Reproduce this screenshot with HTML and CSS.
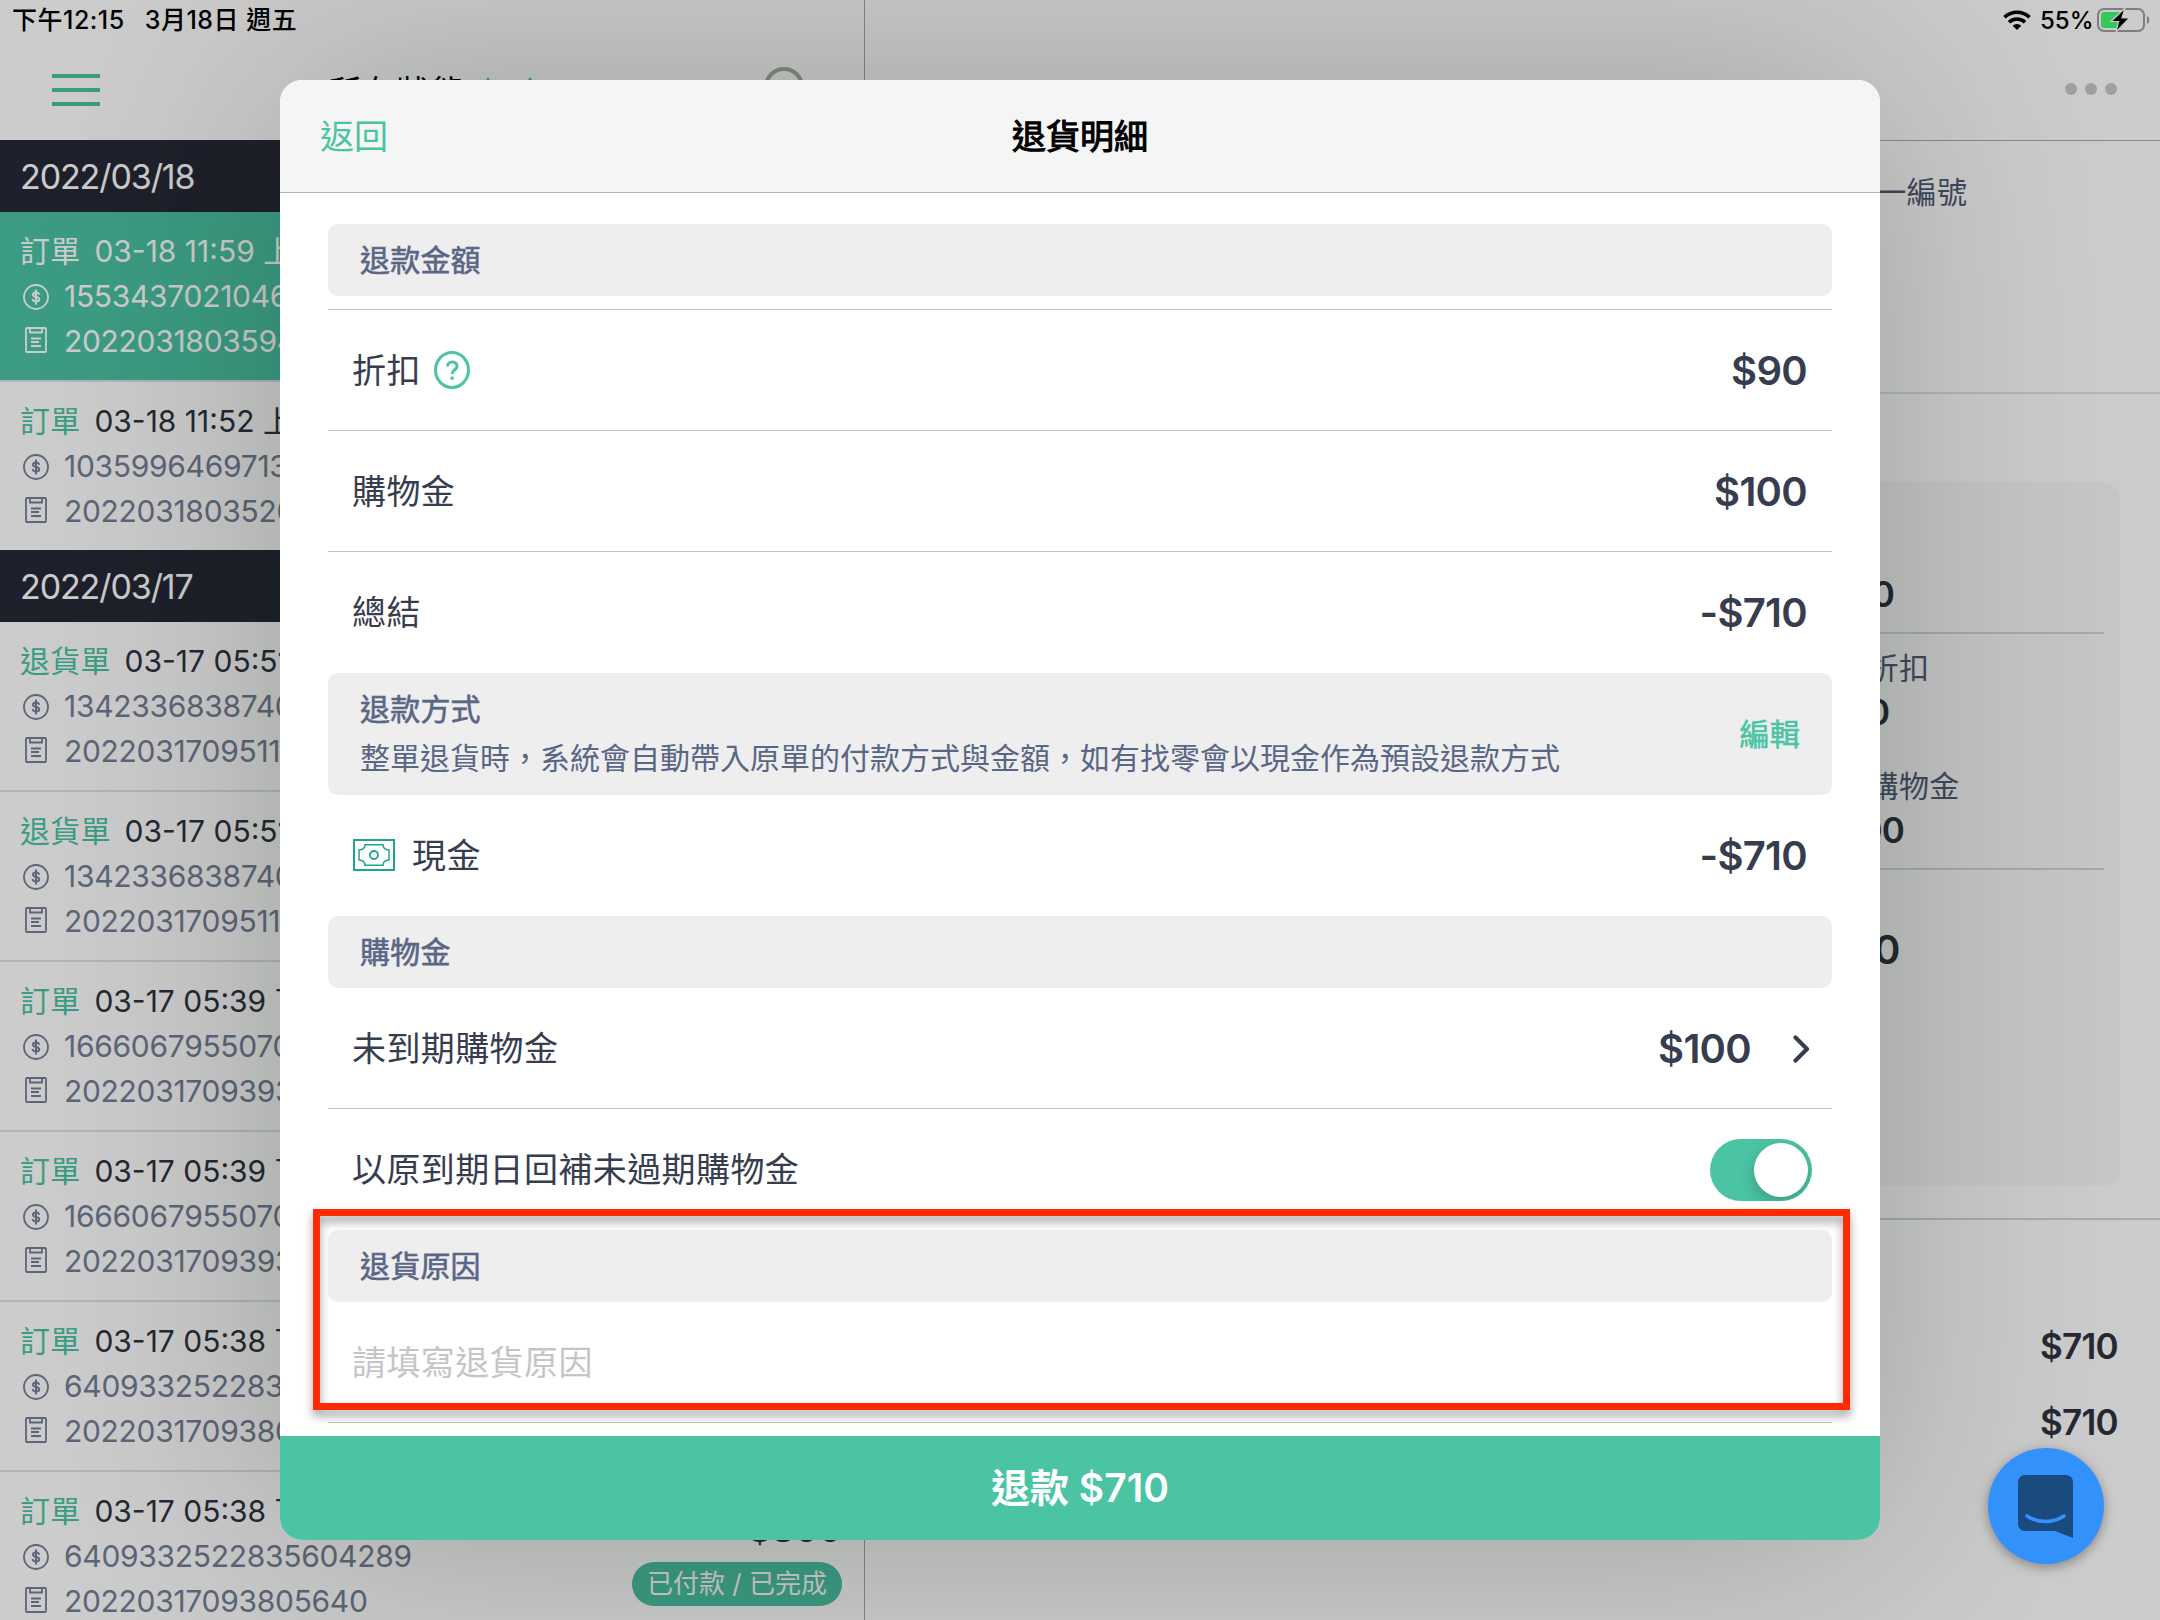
FILE: index.html
```
<!DOCTYPE html>
<html lang="zh-Hant">
<head>
    <title>退貨明細</title>
    <meta charset="utf-8">
    <meta name="viewport" content="width=device-width, initial-scale=1.0">
    <link rel="stylesheet" href="styles.css">
</head>
<body>
    <!-- Shared icons -->
    <svg width="0" height="0" class="icon-defs">
        <symbol id="icon-coin" viewBox="0 0 26 26">
            <circle cx="13" cy="13" r="12" fill="none" stroke="currentColor" stroke-width="1.8"/>
            <path d="M16 10C15.600 9 14.600 8.600 13 8.600c-1.800 0-3 .8-3 2.100 0 3.100 6.200 1.500 6.200 4.600 0 1.500-1.300 2.300-3.200 2.300-1.700 0-2.900-.6-3.300-1.800M13 6.300v13.400" fill="none" stroke="currentColor" stroke-width="2" stroke-linecap="round"/>
        </symbol>
        <symbol id="icon-note" viewBox="0 0 22 26">
            <rect x="1" y="1" width="20" height="24" rx="1" fill="none" stroke="currentColor" stroke-width="1.8"/>
            <path d="M5 1v4.500h12V1M6 11.500h10M6 15h8M6 19h10" fill="none" stroke="currentColor" stroke-width="1.8"/>
        </symbol>
    </svg>

    <!-- Status bar -->
    <div class="status-bar">
        <div class="status-left"><span>下午12:15</span><span>3月18日 週五</span></div>
        <div class="status-right">
            <svg class="wifi" viewBox="0 0 28 20">
                <path d="M1.500 7.300a18 18 0 0 1 25 0M6 12.200a11.500 11.500 0 0 1 16 0" fill="none" stroke="#000" stroke-width="3.600"/>
                <path d="M14 20l-4.300-4.200a6.300 6.300 0 0 1 8.600 0z"/>
            </svg>
            <span class="percent">55%</span>
            <svg class="battery" viewBox="0 0 54 26">
                <rect x="1" y="2" width="46" height="22" rx="6" fill="none" stroke="#7d7d7d" stroke-width="2"/>
                <path d="M50 9v8c3-1 3-7 0-8z" fill="#7d7d7d"/>
                <path d="M7 5h18v16H7a3 3 0 0 1-3-3V8a3 3 0 0 1 3-3z" fill="#34c759"/>
                <path d="M28 1L14 14.500h7.500L19 25l13.500-14H25z" fill="#000" stroke="#ccc" stroke-width="1.200"/>
            </svg>
        </div>
    </div>

    <div class="app">
        <!-- Order list -->
        <aside class="orders">
            <header class="orders-header">
                <div class="menu"><i></i><i></i><i></i></div>
                <div class="filter">所有狀態
                    <svg width="56" height="28" viewBox="0 0 56 28"><path d="M0 12L7 1l7 11zM42 12l7-11 7 11z" fill="#4bc4a4"/></svg>
                </div>
                <svg class="search" viewBox="0 0 46 46"><circle cx="20" cy="20" r="18" fill="none" stroke="#a9ada8" stroke-width="4"/><path d="M33 33l11 11" stroke="#a9ada8" stroke-width="4"/></svg>
            </header>

            <h2 class="date">2022/03/18</h2>
            <div class="order active">
                <p><b>訂單</b><span>03-18 11:59 上午</span></p>
                <p class="no"><svg class="coin"><use href="#icon-coin"/></svg>1553437021046</p>
                <p class="no"><svg class="note"><use href="#icon-note"/></svg>2022031803594</p>
            </div>
            <div class="order last">
                <p><b>訂單</b><span>03-18 11:52 上午</span></p>
                <p class="no"><svg class="coin"><use href="#icon-coin"/></svg>1035996469713</p>
                <p class="no"><svg class="note"><use href="#icon-note"/></svg>2022031803520</p>
            </div>

            <h2 class="date">2022/03/17</h2>
            <div class="order">
                <p><b>退貨單</b><span>03-17 05:51</span></p>
                <p class="no"><svg class="coin"><use href="#icon-coin"/></svg>1342336838740</p>
                <p class="no"><svg class="note"><use href="#icon-note"/></svg>2022031709511</p>
            </div>
            <div class="order">
                <p><b>退貨單</b><span>03-17 05:51</span></p>
                <p class="no"><svg class="coin"><use href="#icon-coin"/></svg>1342336838740</p>
                <p class="no"><svg class="note"><use href="#icon-note"/></svg>2022031709511</p>
            </div>
            <div class="order">
                <p><b>訂單</b><span>03-17 05:39 下午</span></p>
                <p class="no"><svg class="coin"><use href="#icon-coin"/></svg>1666067955070</p>
                <p class="no"><svg class="note"><use href="#icon-note"/></svg>2022031709393</p>
            </div>
            <div class="order">
                <p><b>訂單</b><span>03-17 05:39 下午</span></p>
                <p class="no"><svg class="coin"><use href="#icon-coin"/></svg>1666067955070</p>
                <p class="no"><svg class="note"><use href="#icon-note"/></svg>2022031709393</p>
            </div>
            <div class="order">
                <p><b>訂單</b><span>03-17 05:38 下午</span></p>
                <p class="no"><svg class="coin"><use href="#icon-coin"/></svg>6409332522835</p>
                <p class="no"><svg class="note"><use href="#icon-note"/></svg>2022031709380</p>
            </div>
            <div class="order with-side">
                <div>
                    <p><b>訂單</b><span>03-17 05:38 下午</span></p>
                    <p class="no"><svg class="coin"><use href="#icon-coin"/></svg>6409332522835604289</p>
                    <p class="no"><svg class="note"><use href="#icon-note"/></svg>20220317093805640</p>
                </div>
                <div class="order-side">
                    <strong>$800</strong>
                    <span class="badge">已付款 / 已完成</span>
                </div>
            </div>
        </aside>

        <!-- Order detail -->
        <main class="detail">
            <header class="detail-header"><i></i><i></i><i></i></header>
            <section class="tax">統一編號</section>
            <section class="summary">
                <div class="card">
                    <div class="cell total"><strong>$900</strong></div>
                    <div class="cell middle">
                        <span>整單折扣</span><strong>-$90</strong>
                        <span class="second">使用購物金</span><strong>-$100</strong>
                    </div>
                    <div class="cell final"><strong>$710</strong></div>
                </div>
            </section>
            <section class="payments">
                <strong>$710</strong>
                <strong>$710</strong>
            </section>
        </main>
    </div>

    <!-- Refund dialog -->
    <div class="overlay">
        <div class="modal">
            <header class="modal-header">
                <a class="back">返回</a>
                <h1>退貨明細</h1>
            </header>

            <div class="modal-body">
                <div class="section first">退款金額</div>
                <div class="row">
                    <span>折扣</span>
                    <svg class="help" viewBox="0 0 36 38">
                        <ellipse cx="18" cy="19" rx="16.500" ry="17.500" fill="none" stroke="#4bc4a4" stroke-width="3"/>
                        <path d="M13.500 15.500c0-6 9.500-6 9.500-.3 0 3.600-4.800 3.500-4.800 7.800" fill="none" stroke="#4bc4a4" stroke-width="3"/>
                        <rect x="16.500" y="25.500" width="3.200" height="3.200" fill="#4bc4a4"/>
                    </svg>
                    <strong>$90</strong>
                </div>
                <div class="row"><span>購物金</span><strong>$100</strong></div>
                <div class="row plain"><span>總結</span><strong>-$710</strong></div>

                <div class="section method">
                    <div>
                        <div>退款方式</div>
                        <p>整單退貨時，系統會自動帶入原單的付款方式與金額，如有找零會以現金作為預設退款方式</p>
                    </div>
                    <a class="edit">編輯</a>
                </div>
                <div class="row plain">
                    <svg class="cash" viewBox="0 0 42 32" fill="none" stroke="#1fa58b">
                        <rect x="1" y="1" width="40" height="30" stroke-width="2"/>
                        <path d="M12 5.800h18c0 3 2 5 6 5.200v10c-4 .2-6 2.200-6 5.200H12c0-3-2-5-6-5.200V11c4-.2 6-2.200 6-5.200z" stroke-width="1.500"/>
                        <circle cx="21" cy="16" r="4" stroke-width="1.800"/>
                    </svg>
                    <span>現金</span><strong>-$710</strong>
                </div>

                <div class="section">購物金</div>
                <div class="row">
                    <span>未到期購物金</span><strong>$100</strong>
                    <svg class="chevron" viewBox="0 0 17 28"><path d="M2.500 2.500L14 14 2.500 25.500" fill="none" stroke="#373d4e" stroke-width="4.200" stroke-linecap="round" stroke-linejoin="round"/></svg>
                </div>
                <div class="row plain">
                    <span>以原到期日回補未過期購物金</span>
                    <div class="toggle"><i></i></div>
                </div>

                <div class="section">退貨原因</div>
                <div class="row reason">
                    <span>請填寫退貨原因</span>
                </div>
                <div class="highlight"></div>
            </div>

            <div class="submit">退款 $710</div>
        </div>
    </div>

    <!-- Chat launcher -->
    <div class="chat">
        <svg width="56" height="64" viewBox="0 0 56 64">
            <path d="M7 0h41a7 7 0 0 1 7 7v56l-18-7H7a7 7 0 0 1-7-7V7a7 7 0 0 1 7-7z" fill="#1b4a7e"/>
            <path d="M9 41c11 7.300 26 7.300 37 0" fill="none" stroke="#3391fb" stroke-width="3.600" stroke-linecap="round"/>
        </svg>
    </div>
</body>
</html>
```
FILE: styles.css
```
/* General styles */
* {
    box-sizing: border-box;
}

body {
    font-family: Inter, "Noto Sans CJK TC", sans-serif;
    margin: 0;
    width: 2160px;
    height: 1620px;
    overflow: hidden;
    position: relative;
    background: #fff;
    color: #2e3441;
}

h1, h2, p {
    margin: 0;
    font-weight: 400;
}

svg {
    display: block;
    flex: none;
}

strong {
    font-weight: 600;
}

.icon-defs {
    position: absolute;
}

/* Status bar */
.status-bar {
    position: absolute;
    z-index: 3;
    top: 0;
    left: 0;
    width: 100%;
    height: 40px;
    padding: 0 9px 0 12px;
    display: flex;
    justify-content: space-between;
    align-items: center;
    font-size: 24px;
    font-weight: 500;
    color: #000;
}

.status-left,
.status-right {
    display: flex;
    align-items: center;
}

.status-left {
    gap: 20px;
    padding-bottom: 4px;
    font-size: 25px;
    letter-spacing: 0.5px;
}

.wifi {
    width: 28px;
    height: 20px;
    margin-right: 9px;
}

.percent {
    width: 57px;
}

.battery {
    width: 54px;
    height: 26px;
}

/* Page behind the dialog */
.app {
    display: flex;
    height: 1620px;
}

.orders {
    width: 865px;
    flex: none;
    border-right: 1px solid #a8a8a8;
    overflow: hidden;
}

.orders-header {
    height: 140px;
    padding: 40px 54px 0 52px;
    display: flex;
    justify-content: space-between;
    align-items: center;
}

.menu {
    display: flex;
    flex-direction: column;
    gap: 10px;
}

.menu i {
    width: 48px;
    height: 4px;
    background: #4bc4a4;
}

.filter {
    display: flex;
    align-items: center;
    gap: 16px;
    font-size: 34px;
    letter-spacing: 0.4px;
    color: #000;
}

.search {
    width: 46px;
    height: 46px;
}

.date {
    height: 72px;
    padding-left: 20px;
    background: #262936;
    color: #fff;
    font-size: 34px;
    line-height: 73px;
    letter-spacing: -1.1px;
}

.order {
    height: 170px;
    padding: 17px 22px 0 20px;
    border-bottom: 2px solid #dde2ea;
    font-size: 30px;
    line-height: 45px;
}

.order.last {
    height: 168px;
    border-bottom: none;
}

.order p {
    display: flex;
    align-items: center;
    height: 45px;
    white-space: nowrap;
}

.order b {
    margin-right: 14px;
    font-weight: 400;
    letter-spacing: 0.2px;
    color: #4bc4a4;
}

.order .no {
    letter-spacing: -0.3px;
    color: #757f96;
}

.coin {
    width: 26px;
    height: 26px;
    margin: 0 15px 0 3px;
}

.note {
    width: 22px;
    height: 26px;
    margin: 0 17px 4px 5px;
}

.active {
    background: #4bc4a4;
}

.active p,
.active b,
.active .no {
    color: #fff;
}

.with-side {
    display: flex;
    justify-content: space-between;
}

.order-side {
    display: flex;
    flex-direction: column;
    align-items: flex-end;
    padding-top: 18px;
}

.order-side strong {
    height: 55px;
    font-size: 36px;
}

.badge {
    width: 210px;
    height: 44px;
    border-radius: 22px;
    background: #4bc4a4;
    color: #fff;
    font-size: 26px;
    line-height: 44px;
    text-align: center;
}

/* Detail panel */
.detail {
    flex: 1;
}

.detail-header {
    height: 141px;
    border-bottom: 1px solid #adadad;
    padding: 38px 43px 0 0;
    display: flex;
    justify-content: flex-end;
    align-items: center;
    gap: 8px;
}

.detail-header i {
    width: 12px;
    height: 12px;
    border-radius: 50%;
    background: #c8c8c8;
}

.tax {
    height: 253px;
    padding: 29px 0 0 981px;
    border-bottom: 2px solid #dde5ec;
    font-size: 30px;
    line-height: 45px;
    letter-spacing: 0.3px;
    color: #515b75;
}

.summary {
    height: 826px;
    padding: 88px 40px 0 0;
    border-bottom: 2px solid #c9d7e0;
}

.card {
    height: 704px;
    padding: 0 16px 0 943px;
    border-radius: 18px;
    background: #f8f8f8;
}

.cell {
    display: flex;
    flex-direction: column;
    font-size: 30px;
    line-height: 44px;
    letter-spacing: 0.3px;
    color: #515b75;
}

.cell strong {
    font-size: 35px;
    letter-spacing: -0.8px;
    color: #2b333e;
}

.total {
    height: 152px;
    padding-top: 90px;
    border-bottom: 2px solid #c9d7e0;
}

.total strong {
    letter-spacing: -1.500px;
}

.middle {
    height: 236px;
    padding-top: 12px;
    border-bottom: 2px solid #c9d7e0;
}

.second {
    margin-top: 30px;
}

.final {
    padding-top: 58px;
}

.final strong {
    font-size: 40px;
    letter-spacing: 0;
}

.payments {
    display: flex;
    flex-direction: column;
    align-items: flex-end;
    gap: 32px;
    padding: 104px 42px 0 0;
    font-size: 35px;
    line-height: 44px;
    letter-spacing: -0.7px;
}

/* Refund dialog */
.overlay {
    position: absolute;
    z-index: 2;
    inset: 0;
    padding-top: 80px;
    background: rgba(0, 0, 0, 0.2);
    overflow: hidden;
}

.modal {
    width: 1600px;
    height: 1460px;
    margin: 0 auto;
    border-radius: 22px;
    background: #fff;
    box-shadow: 0 0 240px rgba(5, 22, 0, 0.24);
    display: flex;
    flex-direction: column;
}

.modal-header {
    height: 113px;
    padding: 0 40px 4px;
    border-bottom: 1px solid #b2b2b2;
    border-radius: 22px 22px 0 0;
    background: #f5f5f5;
    display: grid;
    grid-template-columns: 1fr auto 1fr;
    align-items: center;
    font-size: 34px;
}

.modal-header h1 {
    font-size: 34px;
    font-weight: 400;
    -webkit-text-stroke: 1.100px #000;
    color: #000;
}

.back {
    color: #4bc4a4;
}

.modal-body {
    position: relative;
    flex: 1;
    padding: 31px 48px 0;
    color: #373d4e;
}

.section {
    height: 72px;
    padding: 0 32px;
    border-radius: 10px;
    background: #eee;
    color: #596685;
    font-size: 30px;
    line-height: 72px;
    letter-spacing: 0.2px;
    -webkit-text-stroke: 0.6px currentColor;
}

.first {
    margin-bottom: 13px;
}

.first + .row {
    height: 122px;
    border-top: 1px solid #c4c4c6;
}

.method {
    height: 122px;
    display: flex;
    justify-content: space-between;
    align-items: center;
    line-height: 49px;
}

.method p {
    font-size: 30px;
    letter-spacing: 0;
    -webkit-text-stroke: 0;
}

.edit {
    color: #4bc4a4;
}

.row {
    height: 121px;
    padding: 0 25px 0 24px;
    border-bottom: 1px solid #c4c4c6;
    display: flex;
    align-items: center;
    font-size: 34px;
}

.row.plain {
    border-bottom-color: transparent;
}

.row span {
    padding-bottom: 4px;
    letter-spacing: 0.4px;
}

.row strong {
    margin-left: auto;
    padding-top: 1px;
    font-size: 40px;
    letter-spacing: -0.7px;
}

.help {
    width: 36px;
    height: 38px;
    margin-left: 13px;
}

.cash {
    width: 42px;
    height: 32px;
    margin: 0 17px 0 1px;
}

.chevron {
    width: 17px;
    height: 28px;
    margin: 2px -3px 0 42px;
}

.toggle {
    width: 102px;
    height: 62px;
    margin: 2px -5px 0 auto;
    padding: 4px;
    border-radius: 31px;
    background: #4bc4a4;
    display: flex;
    justify-content: flex-end;
    overflow: hidden;
}

.toggle i {
    width: 54px;
    height: 54px;
    border-radius: 50%;
    background: #fff;
    box-shadow: 0 6px 16px rgba(0, 0, 0, 0.2);
}

.reason {
    color: #c5c5c7;
}

/* Red frame drawn over the reason field */
.highlight {
    position: absolute;
    top: 1016px;
    left: 33px;
    width: 1537px;
    height: 201px;
    border: 7px solid #ff2a00;
    filter: drop-shadow(0 6px 5px rgba(0, 0, 0, 0.38));
}

.submit {
    height: 104px;
    border-radius: 0 0 22px 22px;
    background: #4bc4a4;
    color: #fff;
    font-size: 39px;
    font-weight: 600;
    line-height: 104px;
    text-align: center;
}

/* Chat launcher */
.chat {
    position: absolute;
    z-index: 3;
    left: 1988px;
    top: 1448px;
    width: 116px;
    height: 116px;
    padding: 27px 0 0 30px;
    border-radius: 50%;
    background: #3391fb;
    box-shadow: 0 3px 12px rgba(0, 0, 0, 0.35);
}
```
